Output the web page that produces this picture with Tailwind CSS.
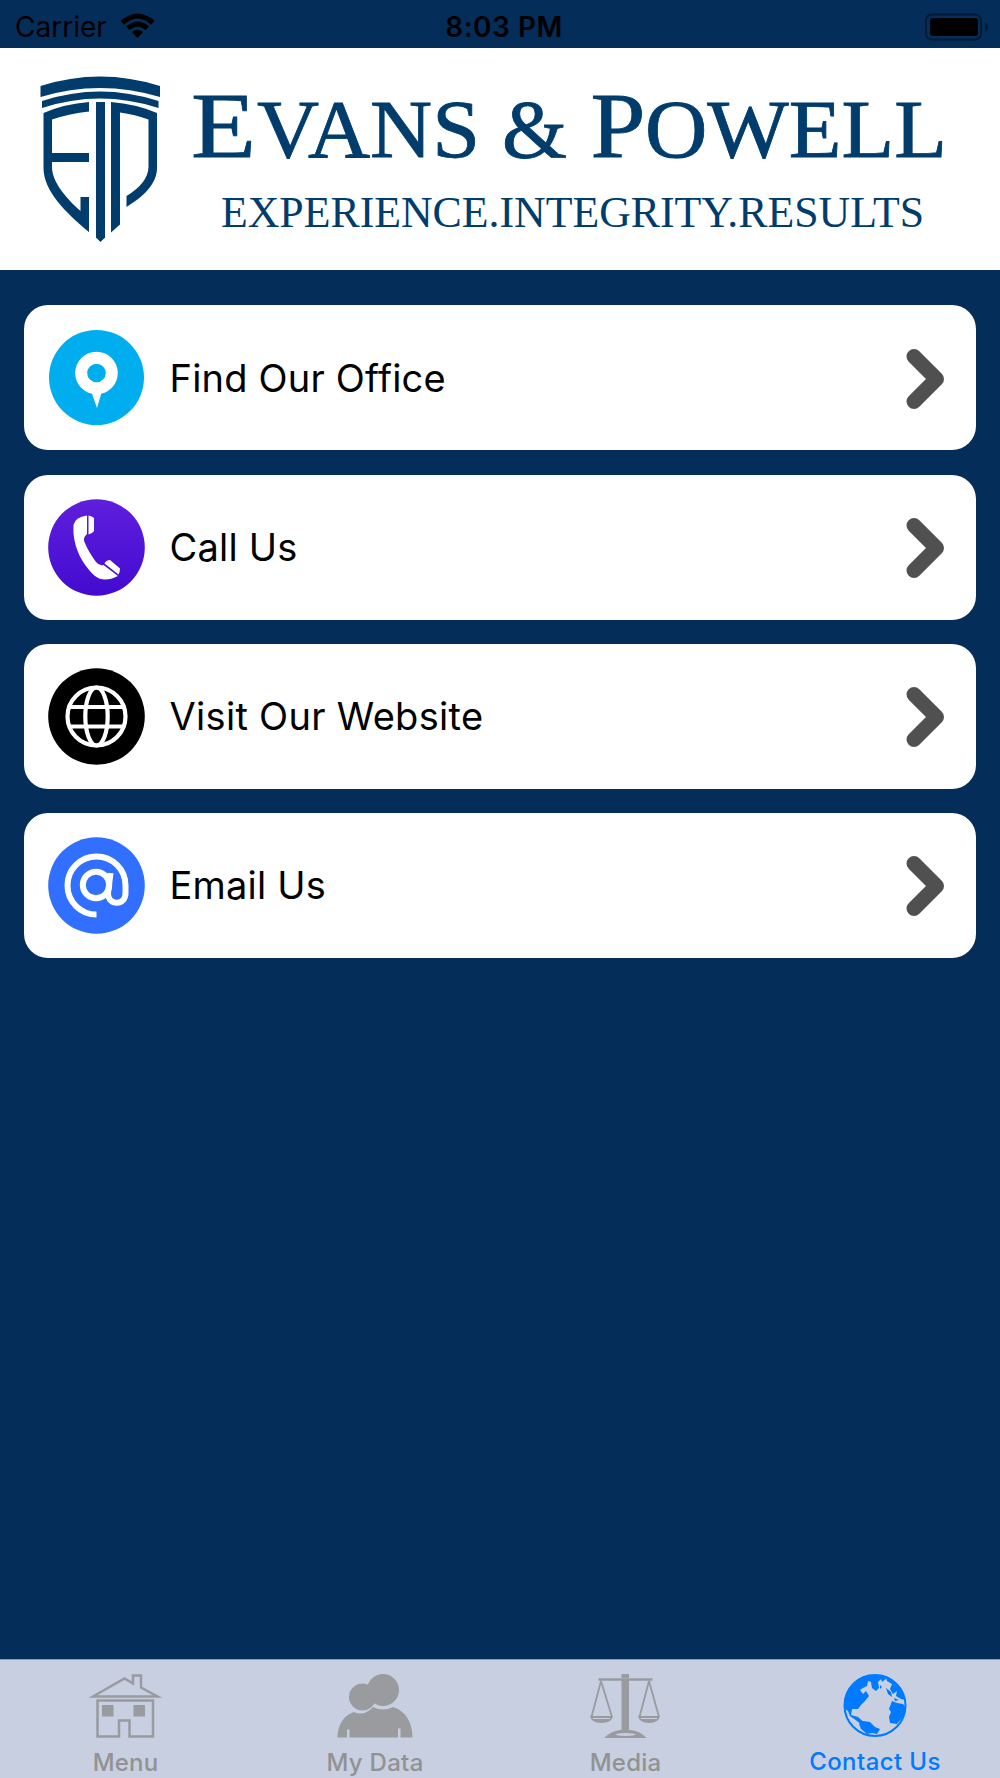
<!DOCTYPE html>
<html lang="en">
  <head>
    <meta charset="UTF-8" />
    <meta name="viewport" content="width=device-width, initial-scale=1.0" />
    <title>Evans &amp; Powell - Contact Us</title>
    <script src="https://cdn.jsdelivr.net/npm/@tailwindcss/browser@4"></script>
  </head>
  <body class="bg-[#042d59] font-['Inter',sans-serif] text-black">
    <div class="w-[1000px] h-[1778px] flex flex-col overflow-hidden">
      <!-- Status bar -->
      <div class="h-12 shrink-0 grid grid-cols-3 items-center pl-[15px] pr-3">
        <div class="flex items-center gap-[13px] pb-1">
          <span class="text-[28px] leading-[48px] pt-[3px]">Carrier</span>
          <svg class="w-[35px] h-[26px]" viewBox="0 0 35 26">
            <path d="M.5 8Q17.500-7 34.500 8L31 11.700Q17.500-.5 4 11.700Z" />
            <path d="M6 13.500Q17.500 3.500 29 13.500L25.500 17Q17.500 10 9.500 17Z" />
            <path d="M12 19Q17.500 14.500 23 19L17.500 25Z" />
          </svg>
        </div>
        <span class="text-center text-[28px] leading-[48px] pb-px font-semibold tracking-[0.5px] pl-[5px]">8:03 PM</span>
        <svg class="justify-self-end w-[63px] h-[28px] mb-[2px]" viewBox="0 0 63 28">
          <rect x="1" y="1.500" width="55" height="25" rx="6" fill="none" stroke="#021a35" stroke-width="1.800" />
          <rect x="5" y="5" width="48" height="18" rx="3" />
          <path d="M60 9.500Q63 11 63 14T60 18.500Z" fill="#021a35" />
        </svg>
      </div>

      <!-- Logo banner -->
      <header class="h-[222px] shrink-0 bg-white">
        <svg class="w-full h-full" viewBox="0 48 1000 222" fill="#003c6c">
          <path d="M40.500 86Q100 67 160 86V97Q100 79 40.500 97Z" />
          <path d="M42 101Q100 82 158.500 101V108Q100 89 42 108Z" />
          <path d="M89 102V111.500Q70 113.500 52 119.500V153H89V162H52V167C52 182 66 198 80.500 211V197H89V232C66 213 43.500 191 43.500 168V113Q64 104 89 102Z" />
          <path d="M96 102H105V237.500L100.500 242L96 237.500Z" />
          <path d="M111 102Q136 104 157 113V168C157 184 143 197 126.500 207V196Q148 183 148.500 167V119.500Q135 114.500 120 112.500V224.500L111 232.500Z" />
          <g stroke="#003c6c" stroke-width=".8" font-family="'Liberation Serif', serif">
            <text x="191" y="157" font-size="93" textLength="65" lengthAdjust="spacingAndGlyphs">E</text>
            <text x="257" y="157" font-size="82" textLength="223" lengthAdjust="spacingAndGlyphs">VANS</text>
            <text x="502" y="157" font-size="82" textLength="65" lengthAdjust="spacingAndGlyphs">&amp;</text>
            <text x="590.500" y="157" font-size="93" textLength="55" lengthAdjust="spacingAndGlyphs">P</text>
            <text x="645" y="157" font-size="82" textLength="302" lengthAdjust="spacingAndGlyphs">OWELL</text>
          </g>
          <text x="221" y="227" font-size="43.500" font-family="'Liberation Serif', serif" textLength="703" lengthAdjust="spacingAndGlyphs">EXPERIENCE.INTEGRITY.RESULTS</text>
        </svg>
      </header>

      <!-- Contact options -->
      <main class="flex-1 flex flex-col gap-[24.200px] pt-[35.400px] px-6">
        <a class="h-[145px] shrink-0 bg-white rounded-[24px] flex items-center pl-6 pr-[31px]">
          <svg class="w-[97px] h-[97px] shrink-0" viewBox="0 0 97 97">
            <circle cx="48.500" cy="48.500" r="47.500" fill="#00aeef" />
            <path d="M43 62H54L49 79Z" fill="#fff" />
            <circle cx="48.500" cy="44" r="15.300" fill="#00aeef" stroke="#fff" stroke-width="12" />
          </svg>
          <span class="ml-[24.500px] pt-px flex-1 text-[38px] tracking-[0.2px]">Find Our Office</span>
          <svg class="w-[40px] h-[62px] mt-[2px]" viewBox="0 0 40 62"><path d="M9 8.500L31.500 31L9 53.500" fill="none" stroke="#505050" stroke-width="15" stroke-linecap="round" stroke-linejoin="round" /></svg>
        </a>
        <a class="h-[145px] shrink-0 bg-white rounded-[24px] flex items-center pl-6 pr-[31px]">
          <svg class="w-[97px] h-[97px] shrink-0" viewBox="0 0 97 97">
            <defs>
              <linearGradient id="call" x2="0" y2="1">
                <stop stop-color="#5f1fdc" />
                <stop offset="1" stop-color="#430bd0" />
              </linearGradient>
            </defs>
            <circle cx="48.500" cy="48.500" r="48.300" fill="url(#call)" />
            <g fill="#fff">
              <path d="M39 16.500Q27 18 25.500 26C24 50 37 68 47 77Q56 84 70 77L55.500 66Q51 67 48 63Q40 52 36.500 43Q34.500 39 39 35Z" />
              <path d="M40.500 16.500Q44 17 46 19V32Q44 35 40.500 35.500Z" />
              <path d="M56.500 64.500Q58 61 62 61L72 69.500Q72 73 70.500 75.500Z" />
            </g>
          </svg>
          <span class="ml-[24.500px] pt-px flex-1 text-[38px] tracking-[0.2px]">Call Us</span>
          <svg class="w-[40px] h-[62px] mt-[2px]" viewBox="0 0 40 62"><path d="M9 8.500L31.500 31L9 53.500" fill="none" stroke="#505050" stroke-width="15" stroke-linecap="round" stroke-linejoin="round" /></svg>
        </a>
        <a class="h-[145px] shrink-0 bg-white rounded-[24px] flex items-center pl-6 pr-[31px]">
          <svg class="w-[97px] h-[97px] shrink-0" viewBox="0 0 97 97">
            <circle cx="48.500" cy="48.500" r="48.300" />
            <g fill="none" stroke="#fff" stroke-width="4.200">
              <circle cx="48.500" cy="48.500" r="29" />
              <ellipse cx="48.500" cy="48.500" rx="11.200" ry="29" />
              <path d="M22 39H75M22 58.500H75" />
            </g>
          </svg>
          <span class="ml-[24.500px] pt-px flex-1 text-[38px] tracking-[0.300px]">Visit Our Website</span>
          <svg class="w-[40px] h-[62px] mt-[2px]" viewBox="0 0 40 62"><path d="M9 8.500L31.500 31L9 53.500" fill="none" stroke="#505050" stroke-width="15" stroke-linecap="round" stroke-linejoin="round" /></svg>
        </a>
        <a class="h-[145px] shrink-0 bg-white rounded-[24px] flex items-center pl-6 pr-[31px]">
          <svg class="w-[97px] h-[97px] shrink-0" viewBox="0 0 97 97">
            <circle cx="48.500" cy="48.500" r="48.300" fill="#306fff" />
            <g fill="none" stroke="#fff" stroke-width="6">
              <path d="M48.500 77.500A29 29 0 1 1 77.500 48.500V56C77.500 69 60 69 60 56L62.500 36" />
              <circle cx="48" cy="48" r="13.200" />
            </g>
          </svg>
          <span class="ml-[24.500px] pt-px flex-1 text-[38px] tracking-[0.2px]">Email Us</span>
          <svg class="w-[40px] h-[62px] mt-[2px]" viewBox="0 0 40 62"><path d="M9 8.500L31.500 31L9 53.500" fill="none" stroke="#505050" stroke-width="15" stroke-linecap="round" stroke-linejoin="round" /></svg>
        </a>
      </main>

      <!-- Tab bar -->
      <nav class="h-[119px] shrink-0 border-t border-[#8f9bb6] bg-[#c7cfe1] grid grid-cols-4 text-[24px] leading-[28px] font-medium text-[#929292]">
        <a class="flex flex-col items-center pt-[14px]">
          <svg class="w-[74px] h-[64px] overflow-visible" viewBox="0 0 74 64" fill="none" stroke="#999b9e" stroke-width="2.500" stroke-miterlimit="10">
            <path d="M5 22.500L36.500 4.500L45 9.500V1.500H53V13.500L69.500 22.500Z" />
            <path d="M9.500 26.500H65V62.500H41.500V46.500H31V62.500H9.500Z" />
            <path d="M14 31H25.500V42.500H14ZM45.500 31H57V42.500H45.500Z" fill="#999b9e" stroke="none" />
          </svg>
          <span class="mt-[11px] pl-px tracking-[0.2px]">Menu</span>
        </a>
        <a class="flex flex-col items-center pt-[14px]">
          <svg class="w-[76px] h-[64px]" viewBox="0 0 76 64" fill="#999b9e">
            <circle cx="25.500" cy="23" r="13.500" />
            <circle cx="46" cy="16" r="16" />
            <path d="M.5 63.500C.5 51 7 41 17 38Q25 42 33 36L36 33Q46 38 56 33C69 37 75.500 49 75.500 63.500H63.500V54.500H61V63.500H12.500V55.500H10V63.500Z" />
          </svg>
          <span class="mt-[11px] tracking-[0.3px]">My Data</span>
        </a>
        <a class="flex flex-col items-center pt-[14px]">
          <svg class="w-[70px] h-[64px]" viewBox="0 0 70 64" fill="#999b9e">
            <path d="M31.500 0H39V56H31.500Z" />
            <path d="M31.500 4.500H39" stroke="#c7cfe1" />
            <path d="M8.500 5.500H62.500" stroke="#999b9e" stroke-width="2.500" />
            <path d="M11 7L1.500 43M11 7L22 43M59 7L49.500 43M59 7L69 43" stroke="#999b9e" stroke-width="1.800" fill="none" />
            <path d="M0 42H23Q22 49 11.500 49T0 42ZM48 42H70Q69 49 59 49T48 42Z" />
            <path d="M3 44.500H20M51 44.500H67" stroke="#c7cfe1" stroke-width="1.200" />
            <path d="M14 64Q21 57 30 56H41Q50 57 56.500 64Z" />
            <ellipse cx="35.500" cy="60.500" rx="10" ry="1.500" fill="#c7cfe1" />
          </svg>
          <span class="mt-[11px] pl-px tracking-[0.2px]">Media</span>
        </a>
        <a class="flex flex-col items-center pt-[14px] text-[#007aff]">
          <svg class="w-[64px] h-[64px]" viewBox="0 0 64 64" fill="#007aff">
            <circle cx="32" cy="31.500" r="30.500" fill="none" stroke="#007aff" stroke-width="2" />
            <path d="M2 35L1 27C3 15 11 5 22 2L35 1L44 4L39 8L38 5L35 8L36 14L33 17L29 14L28 8L25 7L24 12L20 14L17 16L20 20L23 17L26 22L22 27L18 31L15 35L9 35L8 41L15 43L23 50L21 53L14 47L7 42L5 37Z" />
            <path d="M16 50L20 47L27 48L32 53L37 55L34 60L29 59L24 60L18 55Z" />
            <path d="M43 3Q55 8 60 18L62 26L58 25L53 22L54 17L50 20L47 15L49 10L44 7Z" />
            <path d="M49 27L54 29L60 30L63 34Q61 43 54 50L47 49L46 43L48 38L46 35Z" />
            <path d="M37 11L39 13L37 15ZM43 14L48 18L49 23L45 20ZM51 24L56 26L52 27Z" />
          </svg>
          <span class="mt-[10px] tracking-[0.4px]">Contact Us</span>
        </a>
      </nav>
    </div>
  </body>
</html>
